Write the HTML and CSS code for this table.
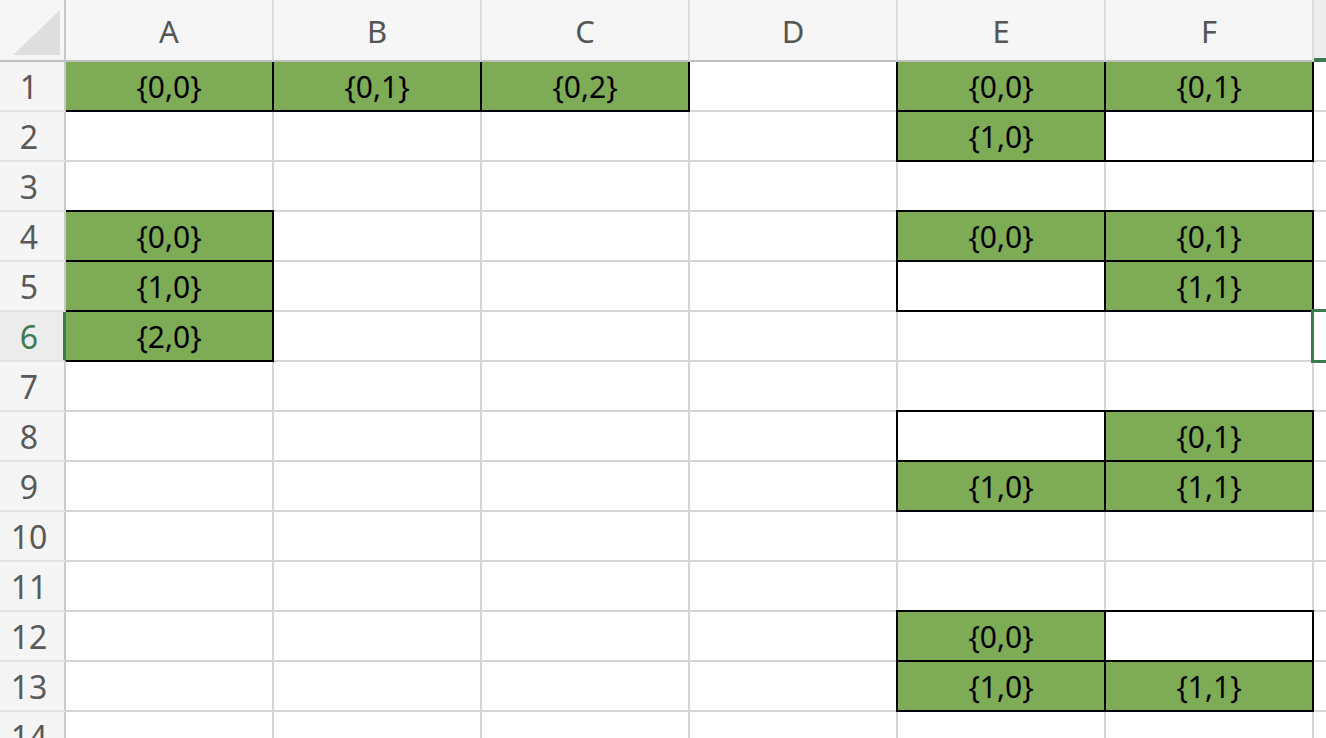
FILE: index.html
```html
<!DOCTYPE html>
<html>
<head>
<meta charset="utf-8">
<link rel="stylesheet" href="styles.css">
</head>
<body>
<div class="sheet">
  <div class="c h corner"><svg class="tri" width="66" height="62" viewBox="0 0 66 62"><polygon points="13,55 60,55 60,10" fill="#dedede"/></svg></div>
  <div class="c h">A</div><div class="c h">B</div><div class="c h">C</div><div class="c h">D</div><div class="c h">E</div><div class="c h">F</div><div class="c h hsel"></div>

  <div class="c r">1</div>
  <div class="c g b">{0,0}</div><div class="c g b">{0,1}</div><div class="c g b">{0,2}</div><div class="c"></div><div class="c g b">{0,0}</div><div class="c g b">{0,1}</div><div class="c"></div>

  <div class="c r">2</div>
  <div class="c"></div><div class="c"></div><div class="c"></div><div class="c"></div><div class="c g b">{1,0}</div><div class="c b"></div><div class="c"></div>

  <div class="c r">3</div>
  <div class="c"></div><div class="c"></div><div class="c"></div><div class="c"></div><div class="c"></div><div class="c"></div><div class="c"></div>

  <div class="c r">4</div>
  <div class="c g b">{0,0}</div><div class="c"></div><div class="c"></div><div class="c"></div><div class="c g b">{0,0}</div><div class="c g b">{0,1}</div><div class="c"></div>

  <div class="c r">5</div>
  <div class="c g b">{1,0}</div><div class="c"></div><div class="c"></div><div class="c"></div><div class="c b"></div><div class="c g b">{1,1}</div><div class="c"></div>

  <div class="c r rsel">6</div>
  <div class="c g b">{2,0}</div><div class="c"></div><div class="c"></div><div class="c"></div><div class="c"></div><div class="c"></div><div class="c sel"></div>

  <div class="c r">7</div>
  <div class="c"></div><div class="c"></div><div class="c"></div><div class="c"></div><div class="c"></div><div class="c"></div><div class="c"></div>

  <div class="c r">8</div>
  <div class="c"></div><div class="c"></div><div class="c"></div><div class="c"></div><div class="c b"></div><div class="c g b">{0,1}</div><div class="c"></div>

  <div class="c r">9</div>
  <div class="c"></div><div class="c"></div><div class="c"></div><div class="c"></div><div class="c g b">{1,0}</div><div class="c g b">{1,1}</div><div class="c"></div>

  <div class="c r">10</div>
  <div class="c"></div><div class="c"></div><div class="c"></div><div class="c"></div><div class="c"></div><div class="c"></div><div class="c"></div>

  <div class="c r">11</div>
  <div class="c"></div><div class="c"></div><div class="c"></div><div class="c"></div><div class="c"></div><div class="c"></div><div class="c"></div>

  <div class="c r">12</div>
  <div class="c"></div><div class="c"></div><div class="c"></div><div class="c"></div><div class="c g b">{0,0}</div><div class="c b"></div><div class="c"></div>

  <div class="c r">13</div>
  <div class="c"></div><div class="c"></div><div class="c"></div><div class="c"></div><div class="c g b">{1,0}</div><div class="c g b">{1,1}</div><div class="c"></div>

  <div class="c r">14</div>
  <div class="c"></div><div class="c"></div><div class="c"></div><div class="c"></div><div class="c"></div><div class="c"></div><div class="c"></div>
</div>
</body>
</html>
```

FILE: styles.css
```css
html, body {
  margin: 0;
  padding: 0;
  overflow: hidden;
  background: #ffffff;
  width: 1326px;
  height: 738px;
}

.sheet {
  display: grid;
  grid-template-columns: 66px repeat(7, 208px);
  grid-template-rows: 62px;
  grid-auto-rows: 50px;
  width: 1326px;
  height: 738px;
  overflow: hidden;
  font-family: "Noto Sans", "Open Sans", sans-serif;
}

.c {
  box-sizing: border-box;
  border-right: 2px solid #d6d6d6;
  border-bottom: 2px solid #d6d6d6;
  display: flex;
  align-items: center;
  justify-content: center;
  font-size: 30px;
  color: #000000;
  line-height: 1;
  padding-top: 1px;
}

.h {
  background: #f6f6f6;
  border-right-color: #dddddd;
  border-bottom-color: #bfbfbf;
  color: #555555;
  font-size: 31px;
  position: relative;
  z-index: 2;
  padding-top: 3px;
}

.corner {
  padding: 0;
  border-right-color: #c8c8c8;
  display: block;
}

.tri {
  display: block;
}

.hsel {
  background: #ececec;
  border-bottom-color: #3c7a50;
  box-shadow: inset 0 -2px 0 #3c7a50;
}

.r {
  background: #f5f5f5;
  border-right-color: #c9c9c9;
  border-bottom-color: #e2e2e2;
  color: #595959;
  font-size: 32px;
  position: relative;
  z-index: 2;
  padding-right: 6px;
}

.rsel {
  background: #ececec;
  color: #3c7a50;
  border-right-color: #3c7a50;
  box-shadow: inset -1px 0 0 #3c7a50;
}

.g {
  background: #7eab55;
}

.b {
  position: relative;
}

.b::after {
  content: "";
  position: absolute;
  top: -2px;
  left: -2px;
  right: -2px;
  bottom: -2px;
  border: 2px solid #000000;
  z-index: 1;
  pointer-events: none;
}

.sel {
  position: relative;
}

.sel::after {
  content: "";
  position: absolute;
  top: -3px;
  left: -3px;
  right: -3px;
  bottom: -3px;
  border: 3px solid #3c7a50;
  z-index: 3;
  pointer-events: none;
}
```
